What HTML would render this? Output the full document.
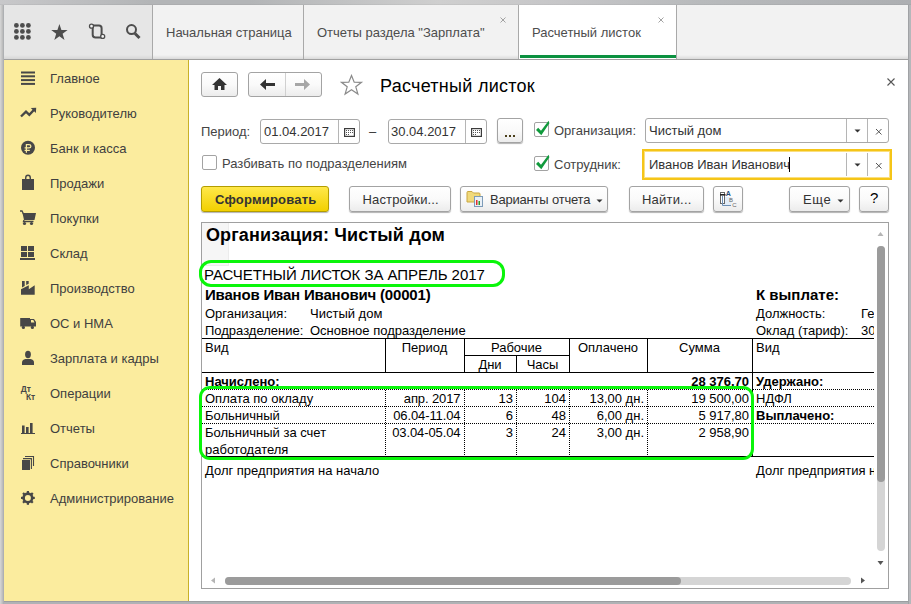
<!DOCTYPE html>
<html><head><meta charset="utf-8">
<style>
*{box-sizing:border-box;margin:0;padding:0}
html,body{width:911px;height:604px;overflow:hidden;background:#fff}
body{position:relative;font-family:"Liberation Sans",sans-serif;font-size:13px;color:#333}
.a{position:absolute;white-space:nowrap;line-height:normal}
.frame{position:absolute;background:#c2c2c2}
/* tab bar */
#tabbar{position:absolute;left:4px;top:5px;width:904px;height:55px;background:linear-gradient(#f2f2f2 0,#f2f2f2 50px,#dadada 54px);border-bottom:1px solid #a0a0a0}
#iconpanel{position:absolute;left:4px;top:5px;width:148px;height:54px;background:linear-gradient(#e6e6e6 0,#e6e6e6 50px,#d6d6d6 54px)}
.sep{position:absolute;top:5px;width:1px;height:54px;background:#a9a9a9}
.tabtxt{position:absolute;top:25px;color:#4d4d4d;font-size:13px;white-space:nowrap}
.x{position:absolute;color:#888}
/* sidebar */
#side{position:absolute;left:4px;top:60px;width:185px;height:541px;background:#fbec9e;border-right:1px solid #c8b128}
.si{position:absolute;left:50px;color:#404040;font-size:13px;white-space:nowrap}
.ic{position:absolute;left:0;top:0}
/* buttons */
.btn{position:absolute;border:1px solid #a3a3a3;border-radius:3px;background:linear-gradient(#fff 0,#fafafa 50%,#ececec 100%);box-shadow:0 1px 1px rgba(0,0,0,.3)}
.fld{position:absolute;border:1px solid #a9a9a9;border-radius:3px;background:#fff}
.lbl{position:absolute;color:#444;white-space:nowrap}
.cb{position:absolute;width:15px;height:15px;border:1px solid #a3a3a3;border-radius:2px;background:#fff}
/* report */
#rep{position:absolute;left:201px;top:222px;width:688px;height:367px;border:1px solid #a0a0a0;background:#fff}
#clip{position:absolute;left:202px;top:223px;width:672px;height:350px;overflow:hidden}
.t{position:absolute;white-space:nowrap;color:#000;line-height:normal}
.hl{position:absolute;height:1px;background:#000}
.vl{position:absolute;width:1px;background:#000}
.hd{position:absolute;height:1px;background-image:linear-gradient(90deg,#000 50%,transparent 50%);background-size:2px 1px}
.vd{position:absolute;width:1px;background-image:linear-gradient(#000 50%,transparent 50%);background-size:1px 2px}
.green{position:absolute;border:3px solid #0af50a;border-radius:11px}
</style></head><body>

<!-- window frame -->
<div class="frame" style="left:0;top:0;width:911px;height:5px;background:linear-gradient(90deg,#c8c8ca 0,#b3b5b7 150px,#b3b5b7 250px,#cfcfcf 440px,#c6c6c8 560px,#b8babc 700px,#adafb2 911px)"></div><div class="frame" style="left:0;top:4px;width:911px;height:1px;background:rgba(0,0,0,.04)"></div>
<div class="frame" style="left:0;top:5px;width:4px;height:599px;background:linear-gradient(90deg,#d2d2d2 0,#d2d2d2 1px,#c8c8c8 1px,#c8c8c8 2px,#bdbdbd 2px,#bdbdbd 3px,#aeb0b3 3px)"></div>
<div class="frame" style="left:908px;top:5px;width:3px;height:599px;background:linear-gradient(90deg,#a0a2a5 0,#a0a2a5 1px,#b5b7ba 1px)"></div>
<div class="frame" style="left:4px;top:601px;width:904px;height:3px;background:linear-gradient(#9c9ea1 0,#9c9ea1 1px,#b0b2b5 1px)"></div>

<!-- tab bar -->
<div id="tabbar"></div>
<div id="iconpanel"></div>
<div class="sep" style="left:152px"></div>
<div class="sep" style="left:303px"></div>
<div class="sep" style="left:518px"></div>
<div class="sep" style="left:676px"></div>
<div style="position:absolute;left:519px;top:5px;width:157px;height:54px;background:#fff"></div>
<div style="position:absolute;left:520px;top:55px;width:156px;height:3px;background:#0b9140"></div>
<div class="tabtxt" style="left:166px">Начальная страница</div>
<div class="tabtxt" style="left:317px">Отчеты раздела "Зарплата"</div>
<div class="tabtxt" style="left:532px">Расчетный листок</div>
<!-- tab bar icons -->
<svg class="ic" width="160" height="60" style="position:absolute;left:0;top:0">
 <g fill="#4d4d4d">
  <circle cx="16.4" cy="25.4" r="2.4"/><circle cx="22.4" cy="25.4" r="2.4"/><circle cx="28.4" cy="25.4" r="2.4"/>
  <circle cx="16.4" cy="31.4" r="2.4"/><circle cx="22.4" cy="31.4" r="2.4"/><circle cx="28.4" cy="31.4" r="2.4"/>
  <circle cx="16.4" cy="37.4" r="2.4"/><circle cx="22.4" cy="37.4" r="2.4"/><circle cx="28.4" cy="37.4" r="2.4"/>
  <polygon points="59.4,24 61.4,30 67.6,30.1 62.6,33.8 64.5,40 59.4,36.2 54.3,40 56.2,33.8 51.2,30.1 57.4,30"/>
 </g>
 <g fill="none" stroke="#4d4d4d" stroke-width="2">
  <path d="M92.7,26.5 V34.8 Q92.7,37.6 95.5,37.6 H102 M92.5,25.6 H99 Q101.6,25.6 101.6,28.2 V36"/>
  <circle cx="131.5" cy="29.6" r="4.5"/>
 </g>
 <circle cx="91.5" cy="26.2" r="2" fill="#f4f4f4" stroke="#4d4d4d" stroke-width="1.3"/>
 <circle cx="102.7" cy="36.4" r="2" fill="#f4f4f4" stroke="#4d4d4d" stroke-width="1.3"/>
 <path d="M135,33.5 L139.5,38" stroke="#4d4d4d" stroke-width="3"/>
</svg>
<svg width="8" height="8" style="position:absolute;left:499px;top:16px"><path d="M1.5,1.5 L6.5,6.5 M6.5,1.5 L1.5,6.5" stroke="#999" stroke-width="0.9"/></svg>
<svg width="8" height="8" style="position:absolute;left:657px;top:16px"><path d="M1.5,1.5 L6.5,6.5 M6.5,1.5 L1.5,6.5" stroke="#999" stroke-width="0.9"/></svg>


<!-- sidebar -->
<div id="side"></div>
<!-- sidebar items -->
<div class="si" style="top:71px">Главное</div>
<div class="si" style="top:106px">Руководителю</div>
<div class="si" style="top:141px">Банк и касса</div>
<div class="si" style="top:176px">Продажи</div>
<div class="si" style="top:211px">Покупки</div>
<div class="si" style="top:246px">Склад</div>
<div class="si" style="top:281px">Производство</div>
<div class="si" style="top:316px">ОС и НМА</div>
<div class="si" style="top:351px">Зарплата и кадры</div>
<div class="si" style="top:386px">Операции</div>
<div class="si" style="top:421px">Отчеты</div>
<div class="si" style="top:456px">Справочники</div>
<div class="si" style="top:491px">Администрирование</div>
<svg width="60" height="520" style="position:absolute;left:0;top:0">
 <g fill="#474747">
  <!-- hamburger -->
  <rect x="21" y="71.5" width="14" height="2"/><rect x="21" y="75.3" width="14" height="2"/>
  <rect x="21" y="79.1" width="14" height="2"/><rect x="21" y="82.9" width="14" height="2"/>
  <!-- ruble -->
  <circle cx="28" cy="147.8" r="7"/>
  <!-- bag -->
  <rect x="22" y="179" width="12" height="11"/>
  <!-- cart -->
  <polygon points="22.5,213 36,213 34.5,220 24,220"/>
  <circle cx="24.5" cy="223.5" r="1.6"/><circle cx="31.5" cy="223.5" r="1.6"/>
  <!-- warehouse -->
  <rect x="21" y="246" width="6" height="5"/><rect x="28" y="246" width="6" height="5"/>
  <rect x="21" y="252" width="6" height="5"/><rect x="28" y="252" width="6" height="5"/>
  <rect x="20" y="258" width="15" height="2"/>
  <!-- factory -->
  <polygon points="22,281 24.7,281 24.7,286 22,287.4"/><polygon points="26.2,281 28.7,281 28.7,283.7 26.2,285"/>
  <polygon points="21,289.3 28.8,285.2 28.8,289.3 34.7,285.2 34.7,294.7 21,294.7"/>
  <!-- truck -->
  <rect x="20.2" y="318" width="9.8" height="8.5"/>
  <path d="M30,319 H34 L36,322 V326.5 H30 Z M31,320 V322.5 H34.5 L33.3,320 Z" fill-rule="evenodd"/>
  <circle cx="23.4" cy="327.4" r="1.6"/><circle cx="32.4" cy="327.4" r="1.6"/>
  <!-- person -->
  <ellipse cx="28" cy="354.5" rx="2.9" ry="3.7"/>
  <path d="M22,365 V362.6 Q22,359.6 25.5,359.1 L28,358.9 L30.5,359.1 Q34,359.6 34,362.6 V365 Z"/>
  <!-- chart -->
  <rect x="22" y="425.5" width="2.6" height="8"/><rect x="26" y="427" width="2.6" height="6.5"/><rect x="30" y="423" width="2.6" height="10.5"/>
  <rect x="21" y="433" width="14" height="1"/>
  <!-- docs -->
  <rect x="22" y="460" width="8" height="10"/>
  <!-- gear -->
  <g transform="translate(27.9,497.9)">
   <rect x="-1.1" y="-6.9" width="2.2" height="3" transform="rotate(0)"/><rect x="-1.1" y="-6.9" width="2.2" height="3" transform="rotate(45)"/>
   <rect x="-1.1" y="-6.9" width="2.2" height="3" transform="rotate(90)"/><rect x="-1.1" y="-6.9" width="2.2" height="3" transform="rotate(135)"/>
   <rect x="-1.1" y="-6.9" width="2.2" height="3" transform="rotate(180)"/><rect x="-1.1" y="-6.9" width="2.2" height="3" transform="rotate(225)"/>
   <rect x="-1.1" y="-6.9" width="2.2" height="3" transform="rotate(270)"/><rect x="-1.1" y="-6.9" width="2.2" height="3" transform="rotate(315)"/>
   <circle r="4.3" fill="none" stroke="#474747" stroke-width="2.6"/>
  </g>
 </g>
 <!-- trend -->
 <path d="M21,116.5 L26,111.7 L29.3,114.8 L34.3,109.5" fill="none" stroke="#474747" stroke-width="2.4"/>
 <polygon points="30.8,108 36.2,107.7 35.9,113" fill="#474747"/>
 <!-- ruble sign -->
 <path d="M26.4,152.8 V144.6 H29 Q30.9,144.6 30.9,146.25 Q30.9,147.9 29,147.9 H24.6 M24.6,150.4 H29.8" fill="none" stroke="#fbec9e" stroke-width="1.25"/>
 <!-- bag handle -->
 <path d="M25.7,181 V178 Q25.7,175.3 28,175.3 Q30.3,175.3 30.3,178 V181" fill="none" stroke="#474747" stroke-width="1.4"/>
 <!-- cart handle -->
 <path d="M20,211 H22 L23.5,214 M24,220 L23.5,221.5 H33.5" fill="none" stroke="#474747" stroke-width="1.3"/>
 <!-- docs outlines -->
 <path d="M23,458.6 H31.4 V469 M25,456.5 H33.5 V466" fill="none" stroke="#474747" stroke-width="1.1"/>
 <!-- gear hole -->
 
 <!-- Dt Kt -->
 <text x="20.8" y="392.2" font-family="Liberation Sans" font-weight="bold" font-size="8.4" fill="#474747">Дт</text>
 <text x="26" y="400" font-family="Liberation Sans" font-weight="bold" font-size="8.4" fill="#474747">Кт</text>
</svg>


<!-- content -->
<!-- header -->
<svg width="10" height="10" style="position:absolute;left:886px;top:77px"><path d="M1.5,1.5 L8.5,8.5 M8.5,1.5 L1.5,8.5" stroke="#555" stroke-width="1.1"/></svg>
<div class="btn" style="left:201px;top:72px;width:37px;height:25px;box-shadow:none"></div>
<svg width="16" height="13" style="position:absolute;left:212px;top:78px"><path d="M7.5,0 L15,7 H12.5 V12 H9 V8 H6 V12 H2.5 V7 H0 Z" fill="#333"/></svg>
<div class="btn" style="left:248px;top:72px;width:74px;height:25px;box-shadow:none"></div>
<div style="position:absolute;left:285px;top:73px;width:1px;height:23px;background:#d0d0d0"></div>
<svg width="16" height="12" style="position:absolute;left:260px;top:79px"><path d="M0,5.5 L6,0 V4 H15 V7 H6 V11 Z" fill="#333"/></svg>
<svg width="16" height="12" style="position:absolute;left:295px;top:79px"><path d="M15,5.5 L9,0 V4 H0 V7 H9 V11 Z" fill="#a6a6a6"/></svg>
<svg width="24" height="22" style="position:absolute;left:340px;top:74px"><polygon points="11.5,1.5 14.2,8.2 21.5,8.3 15.8,12.8 17.9,20 11.5,15.8 5.1,20 7.2,12.8 1.5,8.3 8.8,8.2" fill="none" stroke="#8a8a8a" stroke-width="1.2" stroke-linejoin="miter"/></svg>
<div class="a" style="left:380px;top:76px;font-size:18px;color:#000;letter-spacing:0.27px">Расчетный листок</div>

<!-- filters -->
<div class="lbl" style="left:201px;top:124px">Период:</div>
<div class="fld" style="left:260px;top:119px;width:100px;height:25px"></div>
<div style="position:absolute;left:338px;top:120px;width:1px;height:23px;background:#b5b5b5"></div>
<div class="a" style="left:264px;top:124px;color:#333">01.04.2017</div>
<svg width="11" height="9" style="position:absolute;left:344px;top:128px"><rect x="0.6" y="0.6" width="9.8" height="7.8" fill="#fff" stroke="#3c3c3c" stroke-width="1.2"/><g fill="#555"><rect x="2" y="2" width="1" height="1"/><rect x="4" y="2" width="1" height="1"/><rect x="6" y="2" width="1" height="1"/><rect x="8" y="2" width="1" height="1"/><rect x="2" y="4" width="1" height="1"/><rect x="4" y="4" width="1" height="1"/><rect x="6" y="4" width="1" height="1"/><rect x="8" y="4" width="1" height="1"/><rect x="2" y="6" width="1" height="1"/><rect x="4" y="6" width="1" height="1"/></g></svg>
<div class="a" style="left:369px;top:124px;color:#333">&#8211;</div>
<div class="fld" style="left:388px;top:119px;width:99px;height:25px"></div>
<div style="position:absolute;left:465px;top:120px;width:1px;height:23px;background:#b5b5b5"></div>
<div class="a" style="left:391px;top:124px;color:#333">30.04.2017</div>
<svg width="11" height="9" style="position:absolute;left:471px;top:128px"><rect x="0.6" y="0.6" width="9.8" height="7.8" fill="#fff" stroke="#3c3c3c" stroke-width="1.2"/><g fill="#555"><rect x="2" y="2" width="1" height="1"/><rect x="4" y="2" width="1" height="1"/><rect x="6" y="2" width="1" height="1"/><rect x="8" y="2" width="1" height="1"/><rect x="2" y="4" width="1" height="1"/><rect x="4" y="4" width="1" height="1"/><rect x="6" y="4" width="1" height="1"/><rect x="8" y="4" width="1" height="1"/><rect x="2" y="6" width="1" height="1"/><rect x="4" y="6" width="1" height="1"/></g></svg>
<div class="btn" style="left:497px;top:118px;width:26px;height:25px"></div>
<svg width="12" height="3" style="position:absolute;left:505px;top:135px"><g fill="#4a3f1a"><rect x="0" y="0" width="2" height="2"/><rect x="4" y="0" width="2" height="2"/><rect x="8" y="0" width="2" height="2"/></g></svg>

<div class="cb" style="left:202px;top:155px"></div>
<div class="lbl" style="left:222px;top:156px">Разбивать по подразделениям</div>

<div class="cb" style="left:534px;top:122px"></div>
<svg width="20" height="20" style="position:absolute;left:530px;top:116px"><polygon points="6,14 8.2,11.8 11,14.8 18.6,4.8 19.4,7.2 11.3,19.2" fill="#109a3c"/></svg>
<div class="lbl" style="left:554px;top:123px">Организация:</div>
<div class="cb" style="left:534px;top:156px"></div>
<svg width="20" height="20" style="position:absolute;left:530px;top:150px"><polygon points="6,14 8.2,11.8 11,14.8 18.6,4.8 19.4,7.2 11.3,19.2" fill="#109a3c"/></svg>
<div class="lbl" style="left:554px;top:157px">Сотрудник:</div>

<div class="fld" style="left:645px;top:118px;width:244px;height:25px"></div>
<div style="position:absolute;left:846px;top:119px;width:1px;height:23px;background:#b5b5b5"></div>
<div style="position:absolute;left:867px;top:119px;width:1px;height:23px;background:#b5b5b5"></div>
<div class="a" style="left:649px;top:123px;color:#333">Чистый дом</div>
<svg width="8" height="5" style="position:absolute;left:854px;top:129px"><path d="M0.5,0.5 H6.5 L3.5,3.5 Z" fill="#333"/></svg>
<svg width="8" height="8" style="position:absolute;left:875px;top:128px"><path d="M1,1 L6.5,6.5 M6.5,1 L1,6.5" stroke="#555" stroke-width="1"/></svg>

<div style="position:absolute;left:642px;top:149px;width:250px;height:31px;border:2px solid #f5c518;box-shadow:inset 0 0 0 1px rgba(245,197,24,.55)"></div>
<div style="position:absolute;left:846px;top:153px;width:1px;height:23px;background:#b5b5b5"></div>
<div style="position:absolute;left:867px;top:153px;width:1px;height:23px;background:#b5b5b5"></div>
<div class="a" style="left:649px;top:157px;color:#333">Иванов Иван Иванович</div>
<div style="position:absolute;left:789px;top:157px;width:1px;height:15px;background:#000"></div>
<svg width="8" height="5" style="position:absolute;left:854px;top:163px"><path d="M0.5,0.5 H6.5 L3.5,3.5 Z" fill="#333"/></svg>
<svg width="8" height="8" style="position:absolute;left:875px;top:162px"><path d="M1,1 L6.5,6.5 M6.5,1 L1,6.5" stroke="#555" stroke-width="1"/></svg>

<!-- command bar -->
<div class="btn" style="left:201px;top:186px;width:128px;height:26px;border-color:#b39d00;background:linear-gradient(#ffe84a,#f2d000)"></div>
<div class="a" style="left:215px;top:192px;font-weight:bold;color:#333;letter-spacing:0.2px">Сформировать</div>
<div class="btn" style="left:349px;top:186px;width:102px;height:26px"></div>
<div class="a" style="left:362.5px;top:192px;color:#333;letter-spacing:0.15px">Настройки...</div>
<div class="btn" style="left:460px;top:186px;width:148px;height:26px"></div>
<svg width="18" height="18" style="position:absolute;left:466px;top:190px">
 <path d="M1,2.5 Q1,1.5 2,1.5 H6 L7.5,3 H13 Q14,3 14,4 V12 H1 Z" fill="#f0d97a" stroke="#c9a640" stroke-width="1"/>
 <rect x="8.5" y="6.5" width="8" height="10" fill="#e9f0f7" stroke="#7d9bb8" stroke-width="1"/>
 <rect x="10" y="10" width="1.5" height="5" fill="#e03030"/><rect x="12.5" y="11" width="1.5" height="4" fill="#2c9c2c"/>
</svg>
<div class="a" style="left:490px;top:192px;color:#333;letter-spacing:-0.2px">Варианты отчета</div>
<svg width="8" height="5" style="position:absolute;left:596px;top:199px"><path d="M0.5,0.5 H6.5 L3.5,3.5 Z" fill="#333"/></svg>
<div class="btn" style="left:629px;top:186px;width:75px;height:26px"></div>
<div class="a" style="left:642px;top:192px;color:#333;letter-spacing:0.2px">Найти...</div>
<div class="btn" style="left:713px;top:186px;width:30px;height:26px"></div>
<svg width="20" height="20" style="position:absolute;left:719px;top:190px">
 <rect x="4" y="7" width="8.5" height="8.5" fill="#e3edf8"/>
 <rect x="1.5" y="2.5" width="4" height="11" fill="#fff" stroke="#666" stroke-width="1"/>
 <rect x="1" y="4" width="5.5" height="1.6" fill="#222"/>
 <path d="M3.5,6 V15.5 H12" fill="none" stroke="#6f90b5" stroke-width="1"/>
 <text x="6.8" y="6.2" font-family="Liberation Sans" font-weight="bold" font-size="7" fill="#1e4a78">A</text>
 <text x="10" y="12" font-family="Liberation Sans" font-size="6" fill="#666">B</text>
 <text x="13.2" y="16.6" font-family="Liberation Sans" font-size="6" fill="#666">C</text>
</svg>
<div class="btn" style="left:789px;top:186px;width:61px;height:26px"></div>
<div class="a" style="left:803px;top:192px;color:#333;letter-spacing:0.6px">Еще</div>
<svg width="8" height="5" style="position:absolute;left:837px;top:199px"><path d="M0.5,0.5 H6.5 L3.5,3.5 Z" fill="#333"/></svg>
<div class="btn" style="left:859px;top:186px;width:30px;height:26px"></div>
<div class="a" style="left:870px;top:189px;color:#000;font-size:15px">?</div>

<div id="rep"></div>
<div id="clip" style="position:absolute;left:202px;top:223px;width:672px;height:352px;overflow:hidden">
<div style="position:absolute;left:-202px;top:-223px;width:911px;height:604px">
 <div style="position:absolute;left:202px;top:223px;width:27px;height:43px;background:#f6f6f6;border-right:1px solid #ececec;border-bottom:1px solid #ececec"></div>
 <div class="t" style="left:206px;top:225px;font-size:18px;font-weight:bold;letter-spacing:0.12px">Организация: Чистый дом</div>
 <div class="t" style="left:204px;top:266px;font-size:15px;letter-spacing:-0.05px">РАСЧЕТНЫЙ ЛИСТОК ЗА АПРЕЛЬ 2017</div>
 <div class="t" style="left:205px;top:286px;font-size:15px;font-weight:bold;letter-spacing:-0.18px">Иванов Иван Иванович (00001)</div>
 <div class="t" style="left:756px;top:286px;font-size:15px;font-weight:bold">К выплате:</div>
 <div class="t" style="left:205px;top:306px">Организация:</div>
 <div class="t" style="left:310px;top:306px">Чистый дом</div>
 <div class="t" style="left:205px;top:323px">Подразделение:</div>
 <div class="t" style="left:310px;top:323px">Основное подразделение</div>
 <div class="t" style="left:756px;top:306px">Должность:</div>
 <div class="t" style="left:861px;top:306px">Генеральный директор</div>
 <div class="t" style="left:756px;top:323px">Оклад (тариф):</div>
 <div class="t" style="left:861px;top:323px">30 000</div>

 <!-- table lines -->
 <div class="hl" style="left:202px;top:338px;width:672px"></div>
 <div class="hl" style="left:202px;top:372px;width:672px"></div>
 <div class="hl" style="left:464px;top:355px;width:105px"></div>
 <div class="vl" style="left:385px;top:338px;height:34px"></div>
 <div class="vl" style="left:464px;top:338px;height:34px"></div>
 <div class="vl" style="left:516px;top:355px;height:17px"></div>
 <div class="vl" style="left:569px;top:338px;height:34px"></div>
 <div class="vl" style="left:647px;top:338px;height:34px"></div>
 <div class="vl" style="left:752px;top:338px;height:119px"></div>
 <div class="t" style="left:205px;top:340px">Вид</div>
 <div class="t" style="left:385px;top:340px;width:79px;text-align:center">Период</div>
 <div class="t" style="left:464px;top:340px;width:105px;text-align:center">Рабочие</div>
 <div class="t" style="left:464px;top:357px;width:52px;text-align:center">Дни</div>
 <div class="t" style="left:516px;top:357px;width:53px;text-align:center">Часы</div>
 <div class="t" style="left:569px;top:340px;width:78px;text-align:center">Оплачено</div>
 <div class="t" style="left:647px;top:340px;width:105px;text-align:center">Сумма</div>
 <div class="t" style="left:756px;top:340px">Вид</div>

 <div class="t" style="left:205px;top:374px;font-weight:bold">Начислено:</div>
 <div class="t" style="left:600px;top:374px;width:149px;text-align:right;font-weight:bold">28 376,70</div>
 <div class="t" style="left:756px;top:374px;font-weight:bold">Удержано:</div>

 <div class="hd" style="left:202px;top:389px;width:550px"></div>
 <div class="hd" style="left:202px;top:406px;width:550px"></div>
 <div class="hd" style="left:202px;top:423px;width:550px"></div>
 <div class="hl" style="left:202px;top:456px;width:672px"></div>
 <div class="hd" style="left:753px;top:389px;width:121px"></div>
 <div class="hd" style="left:753px;top:406px;width:121px"></div>
 <div class="hd" style="left:753px;top:423px;width:121px"></div>
 <div class="vd" style="left:385px;top:390px;height:66px"></div>
 <div class="vd" style="left:464px;top:390px;height:66px"></div>
 <div class="vd" style="left:516px;top:390px;height:66px"></div>
 <div class="vd" style="left:569px;top:390px;height:66px"></div>
 <div class="vd" style="left:647px;top:390px;height:66px"></div>

 <div class="t" style="left:205px;top:391px">Оплата по окладу</div>
 <div class="t" style="left:300px;top:391px;width:160.5px;text-align:right;letter-spacing:-0.1px">апр. 2017</div>
 <div class="t" style="left:450px;top:391px;width:63px;text-align:right">13</div>
 <div class="t" style="left:500px;top:391px;width:66px;text-align:right">104</div>
 <div class="t" style="left:560px;top:391px;width:84px;text-align:right">13,00 дн.</div>
 <div class="t" style="left:600px;top:391px;width:149px;text-align:right">19 500,00</div>
 <div class="t" style="left:756px;top:391px">НДФЛ</div>

 <div class="t" style="left:205px;top:408px">Больничный</div>
 <div class="t" style="left:300px;top:408px;width:160.5px;text-align:right;letter-spacing:-0.1px">06.04-11.04</div>
 <div class="t" style="left:450px;top:408px;width:63px;text-align:right">6</div>
 <div class="t" style="left:500px;top:408px;width:66px;text-align:right">48</div>
 <div class="t" style="left:560px;top:408px;width:84px;text-align:right">6,00 дн.</div>
 <div class="t" style="left:600px;top:408px;width:149px;text-align:right">5 917,80</div>
 <div class="t" style="left:756px;top:408px;font-weight:bold">Выплачено:</div>

 <div class="t" style="left:205px;top:425px">Больничный за счет</div>
 <div class="t" style="left:205px;top:442px">работодателя</div>
 <div class="t" style="left:300px;top:425px;width:160.5px;text-align:right;letter-spacing:-0.1px">03.04-05.04</div>
 <div class="t" style="left:450px;top:425px;width:63px;text-align:right">3</div>
 <div class="t" style="left:500px;top:425px;width:66px;text-align:right">24</div>
 <div class="t" style="left:560px;top:425px;width:84px;text-align:right">3,00 дн.</div>
 <div class="t" style="left:600px;top:425px;width:149px;text-align:right">2 958,90</div>

 <div class="t" style="left:205px;top:463px">Долг предприятия на начало</div>
 <div class="t" style="left:756px;top:463px">Долг предприятия на начало</div>
</div>
</div>

<!-- green annotations -->
<div class="green" style="left:199px;top:260px;width:306px;height:27px;border-radius:12px"></div>
<div class="green" style="left:199px;top:386px;width:555px;height:74px;border-radius:11px"></div>

<!-- scrollbars -->
<svg width="8" height="6" style="position:absolute;left:877px;top:231px"><path d="M0.5,5 L3.5,1 L6.5,5 Z" fill="#b5b5b5"/></svg>
<div style="position:absolute;left:877px;top:246px;width:8px;height:305px;border-radius:4px;background:#d5d5d5"></div>
<div style="position:absolute;left:877px;top:246px;width:8px;height:236px;border-radius:4px;background:#9b9b9b"></div>
<svg width="8" height="6" style="position:absolute;left:877px;top:560px"><path d="M0.5,1 L3.5,5 L6.5,1 Z" fill="#555"/></svg>
<svg width="6" height="8" style="position:absolute;left:210px;top:577px"><path d="M5,0.5 L1,3.5 L5,6.5 Z" fill="#b5b5b5"/></svg>
<div style="position:absolute;left:225px;top:577px;width:626px;height:8px;border-radius:4px;background:#d5d5d5"></div>
<div style="position:absolute;left:225px;top:577px;width:456px;height:8px;border-radius:4px;background:#9b9b9b"></div>
<svg width="6" height="8" style="position:absolute;left:860px;top:577px"><path d="M1,0.5 L5,3.5 L1,6.5 Z" fill="#555"/></svg>


</body></html>
